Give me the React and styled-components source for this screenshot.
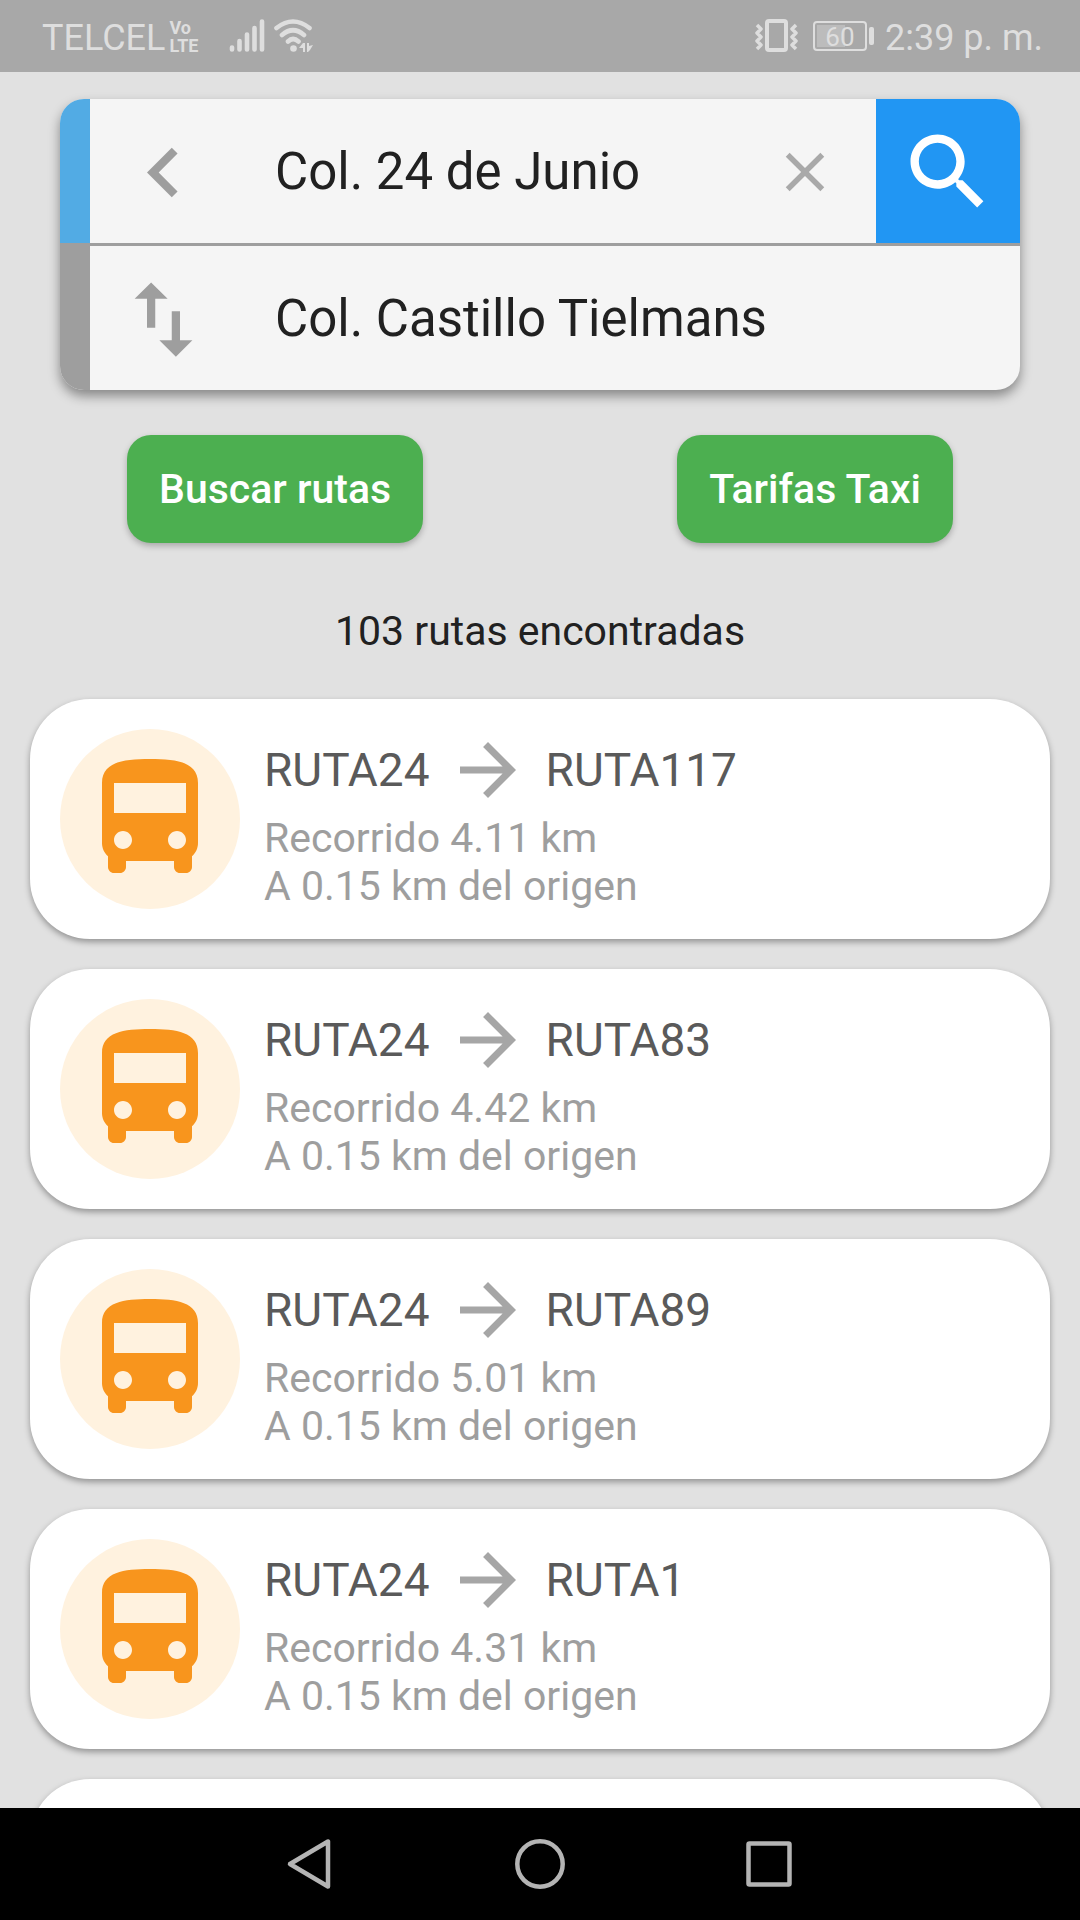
import React, { useState } from "react";
import styled, { createGlobalStyle } from "styled-components";

const routes = [
    { id: 1, from: "RUTA24", to: "RUTA117", distance: "4.11", origin: "0.15" },
    { id: 2, from: "RUTA24", to: "RUTA83", distance: "4.42", origin: "0.15" },
    { id: 3, from: "RUTA24", to: "RUTA89", distance: "5.01", origin: "0.15" },
    { id: 4, from: "RUTA24", to: "RUTA1", distance: "4.31", origin: "0.15" }
];

const paths = {
    back: "M15.41 7.41L14 6l-6 6 6 6 1.41-1.41L10.83 12z",
    swap: "M16 17.01V10h-2v7.01h-3L15 21l4-3.99h-3zM9 3L5 6.99h3V14h2V6.99h3L9 3z",
    close: "M19 6.41L17.59 5 12 10.59 6.41 5 5 6.41 10.59 12 5 17.59 6.41 19 12 13.41 17.59 19 19 17.59 13.41 12z",
    search: "M15.5 14h-.79l-.28-.27C15.41 12.59 16 11.11 16 9.5 16 5.91 13.09 3 9.5 3S3 5.91 3 9.5 5.91 16 9.5 16c1.61 0 3.09-.59 4.23-1.57l.27.28v.79l5 4.99L20.49 19l-4.99-5zm-6 0C7.01 14 5 11.99 5 9.5S7.01 5 9.5 5 14 7.01 14 9.5 11.99 14 9.5 14z",
    forward: "M12 4l-1.41 1.41L16.17 11H4v2h12.17l-5.58 5.59L12 20l8-8z",
    bus: "M4 16c0 .88.39 1.67 1 2.22V20c0 .55.45 1 1 1h1c.55 0 1-.45 1-1v-1h8v1c0 .55.45 1 1 1h1c.55 0 1-.45 1-1v-1.78c.61-.55 1-1.34 1-2.22V6c0-3.5-3.58-4-8-4s-8 .5-8 4v10zm3.5 1c-.83 0-1.5-.67-1.5-1.5S6.67 14 7.5 14s1.5.67 1.5 1.5S8.33 17 7.5 17zm9 0c-.83 0-1.5-.67-1.5-1.5s.67-1.5 1.5-1.5 1.5.67 1.5 1.5-.67 1.5-1.5 1.5zm1.5-6H6V6h12v5z"
};

const Icon = ({ name, size, color }) => (
    <svg width={size} height={size} viewBox="0 0 24 24" fill={color} aria-hidden="true">
        <path d={paths[name]} />
    </svg>
);

const StatusIcons = () => (
    <svg width="86" height="36" viewBox="0 0 86 36" fill="none" stroke="#dedede" strokeLinecap="round" aria-hidden="true">
        <path strokeWidth="4.6" d="M3 29.5v2M10.5 23v8.5M18 16.5v15M25.5 10v21.5M33 3.5v28" />
        <path strokeWidth="4.6" d="M47.5 10q16.5-13 33 0M53 17q11-9.500 22 0M59 23.500q5-5 10.500 0" />
        <circle cx="64.500" cy="30.500" r="3.300" fill="#dedede" stroke="none" />
        <path fill="#dedede" stroke="none" d="M74 25h2v9h-2v-4h-4zM78 25h2v3l4-1-3 5-2 2h-1z" />
    </svg>
);

const VibrateIcon = () => (
    <svg width="44" height="36" viewBox="0 0 44 36" fill="none" stroke="#dedede" strokeWidth="3.5" strokeLinejoin="round" aria-hidden="true">
        <rect x="12" y="3" width="19" height="29" rx="2" strokeWidth="4" />
        <path d="M2 7l4 4-4 4 4 4-4 4 4 4-4 4M41 7l-4 4 4 4-4 4 4 4-4 4 4 4" />
    </svg>
);

export default function RoutesPage()
{
    const [places, setPlaces] = useState({
        origin: "Col. 24 de Junio",
        destination: "Col. Castillo Tielmans"
    });

    const change = (e) => {
        const { name, value } = e.target;
        setPlaces({
            ...places,
            [name]: value
        });
    }

    const swap = () => {
        setPlaces({
            origin: places.destination,
            destination: places.origin
        });
    }

    const clear = () => {
        setPlaces({ ...places, origin: "" });
    }

    return(
        <Page>
            <GlobalStyle />
            <StatusBar>
                <StatusGroup>
                    <StatusText>TELCEL</StatusText>
                    <Volte><span>Vo</span><span>LTE</span></Volte>
                    <StatusIcons />
                </StatusGroup>
                <StatusGroup>
                    <VibrateIcon />
                    <Battery><BatteryLevel>60</BatteryLevel></Battery>
                    <StatusText>2:39 p. m.</StatusText>
                </StatusGroup>
            </StatusBar>
            <Content>
                <SearchForm onSubmit={(e) => e.preventDefault()}>
                    <SearchRow $color="#52abe4">
                        <RowButton type="button" aria-label="Regresar">
                            <Icon name="back" size={99} color="#9e9e9e" />
                        </RowButton>
                        <PlaceInput name="origin" aria-label="Origen" value={places.origin} onChange={change} />
                        <ClearButton type="button" aria-label="Borrar" onClick={clear}>
                            <Icon name="close" size={66} color="#a9a9a9" />
                        </ClearButton>
                        <SearchButton type="submit" aria-label="Buscar">
                            <Icon name="search" size={100} color="#ffffff" />
                        </SearchButton>
                    </SearchRow>
                    <Divider />
                    <SearchRow $color="#9e9e9e">
                        <RowButton type="button" aria-label="Intercambiar" onClick={swap}>
                            <Icon name="swap" size={99} color="#9e9e9e" />
                        </RowButton>
                        <PlaceInput name="destination" aria-label="Destino" value={places.destination} onChange={change} />
                    </SearchRow>
                </SearchForm>
                <Actions>
                    <ActionButton type="button">Buscar rutas</ActionButton>
                    <ActionButton type="button">Tarifas Taxi</ActionButton>
                </Actions>
                <Found>103 rutas encontradas</Found>
                <RouteList>
                    {routes.map((route) => (
                        <RouteCard key={route.id}>
                            <BusCircle>
                                <Icon name="bus" size={144} color="#f8951d" />
                            </BusCircle>
                            <div>
                                <RouteTitle>
                                    {route.from}
                                    <Icon name="forward" size={84} color="#a6a6a6" />
                                    {route.to}
                                </RouteTitle>
                                <RouteInfo>Recorrido {route.distance} km</RouteInfo>
                                <RouteInfo>A {route.origin} km del origen</RouteInfo>
                            </div>
                        </RouteCard>
                    ))}
                    <RouteCard />
                </RouteList>
            </Content>
            <NavBar>
                <NavButton type="button" aria-label="Atrás">
                    <svg width="54" height="54" viewBox="0 0 54 54">
                        <path d="M6 27L44 4.500v45z" />
                    </svg>
                </NavButton>
                <NavButton type="button" aria-label="Inicio">
                    <svg width="54" height="54" viewBox="0 0 54 54">
                        <circle cx="27" cy="27" r="22.700" />
                    </svg>
                </NavButton>
                <NavButton type="button" aria-label="Recientes">
                    <svg width="54" height="54" viewBox="0 0 54 54">
                        <rect x="6.500" y="6.500" width="41" height="41" rx="1" />
                    </svg>
                </NavButton>
            </NavBar>
        </Page>
    )
}

const GlobalStyle = createGlobalStyle`
    * {
        box-sizing: border-box;
    }
    body {
        margin: 0;
        background-color: #e1e1e1;
        font-family: Roboto, "Liberation Sans", sans-serif;
    }
    button, input {
        font-family: inherit;
        border: none;
        padding: 0;
    }
    svg {
        display: block;
        flex-shrink: 0;
    }
`

const Page = styled.div`
    height: 100vh;
    display: flex;
    flex-direction: column;
`

const StatusBar = styled.header`
    display: flex;
    justify-content: space-between;
    align-items: center;
    height: 72px;
    flex-shrink: 0;
    padding: 0 37px 0 42px;
    background-color: #a8a8a8;
    color: #dedede;
`

const StatusGroup = styled.div`
    display: flex;
    align-items: center;
`

const StatusText = styled.span`
    padding-top: 3px;
    font-size: 36px;
`

const Volte = styled.span`
    display: flex;
    flex-direction: column;
    margin: 0 30px 0 4px;
    padding-top: 2px;
    font-size: 18px;
    font-weight: 700;
    line-height: 18px;
`

const Battery = styled.div`
    display: flex;
    align-items: center;
    margin: 0 11px 0 14px;

    &::after {
        content: "";
        width: 5px;
        height: 18px;
        margin-left: 2px;
        border-radius: 2px;
        background-color: #dedede;
    }
`

const BatteryLevel = styled.span`
    width: 54px;
    height: 30px;
    border: 2px solid #dedede;
    border-radius: 4px;
    background: linear-gradient(to right, #bcbcbc 60%, transparent 60%) 2px 2px / 46px 22px no-repeat;
    font-size: 26px;
    line-height: 28px;
    text-align: center;
`

const Content = styled.main`
    flex: 1;
    min-height: 0;
    overflow: hidden;
    padding: 27px 30px 0;
`

const SearchForm = styled.form`
    margin: 0 30px;
    border-radius: 24px;
    background-color: #f5f5f5;
    box-shadow: 0 6px 12px rgba(0, 0, 0, 0.4);
    overflow: hidden;
`

const SearchRow = styled.div`
    display: flex;
    align-items: center;
    height: 144px;
    border-left: 30px solid ${(props) => props.$color};

    button {
        padding-top: 2px;
    }
`

const Divider = styled.div`
    height: 3px;
    background-color: #9e9e9e;
`

const RowButton = styled.button`
    margin: 0 62px 0 24px;
    background: none;
`

const PlaceInput = styled.input`
    flex: 1;
    min-width: 0;
    background: none;
    color: #212121;
    font-size: 51px;
    outline: none;
`

const ClearButton = styled.button`
    margin-right: 38px;
    background: none;
`

const SearchButton = styled.button`
    display: flex;
    justify-content: center;
    align-items: center;
    width: 144px;
    height: 144px;
    background-color: #2196f3;
`

const Actions = styled.div`
    display: flex;
    justify-content: space-around;
    margin: 45px -30px 0;
`

const ActionButton = styled.button`
    height: 108px;
    padding: 0 32px;
    border-radius: 24px;
    background-color: #4caf50;
    box-shadow: 0 3px 6px rgba(0, 0, 0, 0.25);
    color: #ffffff;
    font-size: 41px;
    font-weight: 500;
`

const Found = styled.p`
    margin: 63px 0 42px;
    color: #212121;
    font-size: 41px;
    line-height: 51px;
    text-align: center;
`

const RouteList = styled.ul`
    display: flex;
    flex-direction: column;
    gap: 30px;
    margin: 0;
    padding: 0;
    list-style: none;
`

const RouteCard = styled.li`
    display: flex;
    align-items: center;
    gap: 24px;
    min-height: 240px;
    padding: 0 30px;
    border-radius: 60px;
    background-color: #ffffff;
    box-shadow: 0 3px 6px rgba(0, 0, 0, 0.35);
`

const BusCircle = styled.div`
    display: flex;
    justify-content: center;
    align-items: center;
    width: 180px;
    height: 180px;
    border-radius: 50%;
    background-color: #fff2df;
`

const RouteTitle = styled.h2`
    display: flex;
    align-items: center;
    gap: 16px;
    margin: 0 0 2px;
    color: #5a5a5a;
    font-size: 46px;
    font-weight: 400;
    line-height: 84px;
`

const RouteInfo = styled.p`
    margin: 0;
    color: #9e9e9e;
    font-size: 41px;
    line-height: 48px;
`

const NavBar = styled.nav`
    display: flex;
    justify-content: center;
    align-items: center;
    gap: 175px;
    height: 112px;
    flex-shrink: 0;
    background-color: #000000;
`

const NavButton = styled.button`
    background: none;

    svg {
        fill: none;
        stroke: #b4b4b4;
        stroke-width: 4.5;
        stroke-linejoin: round;
    }
`
